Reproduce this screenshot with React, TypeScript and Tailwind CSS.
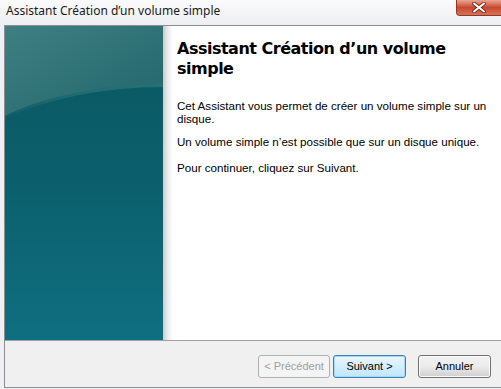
import React from "react";

function LeftArt() {
  return (
    <svg width="158" height="314" viewBox="0 0 158 314" className="block">
      <defs>
        <linearGradient id="top" x1="0" y1="0" x2="1" y2="1">
          <stop offset="0" stopColor="#3e7f82" />
          <stop offset="1" stopColor="#22666b" />
        </linearGradient>
        <linearGradient id="bot" x1="0" y1="0" x2="0" y2="1">
          <stop offset="0" stopColor="#0a5860" />
          <stop offset="0.5" stopColor="#0b5f6c" />
          <stop offset="1" stopColor="#0f6f80" />
        </linearGradient>
        <linearGradient id="edge" x1="0" y1="0" x2="0" y2="1">
          <stop offset="0" stopColor="#4d8b8e" stopOpacity="0.45" />
          <stop offset="1" stopColor="#4d8b8e" stopOpacity="0" />
        </linearGradient>
      </defs>
      <rect x="0" y="0" width="158" height="314" fill="url(#bot)" />
      <path d="M0 0 H158 V58 C100 58 40 70 0 90 Z" fill="url(#top)" />
      <path d="M0 90 C40 70 100 58 158 58 V61 C100 61 40 73 0 93 Z" fill="url(#edge)" />
    </svg>
  );
}

export default function App() {
  return (
    <div
      className="w-[501px] h-[389px] overflow-hidden bg-[#eef0f3] relative"
      style={{ fontFamily: '"Noto Sans", "Liberation Sans", sans-serif' }}
    >
      {/* Title bar */}
      <div className="h-[25px] flex items-start bg-gradient-to-b from-[#fbfbfc] to-[#eceef1] relative">
        <div className="pl-[6px] pt-[3px] text-[12px] leading-[16px] text-[#1a1a1a]">
          Assistant Création d’un volume simple
        </div>
        <div className="absolute left-[456px] top-0 w-[50px] h-[16px] rounded-bl-[4px] border border-t-0 border-[#8a3a2a] bg-gradient-to-b from-[#e9a592] via-[#c8482f] to-[#d77256] flex items-center justify-center">
          <svg width="14" height="11" viewBox="0 0 14 11" className="ml-[-4px]">
            <path d="M2 1.5 L12 9.5 M12 1.5 L2 9.5" stroke="#6b2a1e" strokeWidth="3.6" strokeLinecap="round" />
            <path d="M2 1.5 L12 9.5 M12 1.5 L2 9.5" stroke="#ffffff" strokeWidth="2" strokeLinecap="round" />
          </svg>
        </div>
      </div>

      {/* Client frame */}
      <div className="ml-[4px] border-t border-l border-b border-[#8e8e8e] bg-[#f0f0f0] h-[363px] flex flex-col">
        <div className="flex h-[314px] bg-white">
          <div className="w-[158px] shrink-0">
            <LeftArt />
          </div>
          <div className="w-[10px] shrink-0 bg-gradient-to-r from-[#c9cccf] via-[#ecedee] to-white" />
          <div className="pl-[4px] pt-[13px]">
            <div
              className="text-[16px] leading-[20px] font-bold text-black"
              style={{ fontFamily: '"DejaVu Sans", Verdana, sans-serif', letterSpacing: "-0.5px" }}
            >
              Assistant Création d’un volume
              <br />
              simple
            </div>
            <div
              className="mt-[20px] text-[11.6px] leading-[13px] text-black whitespace-nowrap"
              style={{ fontFamily: '"Liberation Sans", Arial, sans-serif' }}
            >
              <p>
                Cet Assistant vous permet de créer un volume simple sur un
                <br />
                disque.
              </p>
              <p className="mt-[10px]">Un volume simple n’est possible que sur un disque unique.</p>
              <p className="mt-[13px]">Pour continuer, cliquez sur Suivant.</p>
            </div>
          </div>
        </div>
        <div
          className="border-t border-[#a0a0a0] flex-1 flex items-start justify-end pt-[14px] pr-[10px]"
          style={{ fontFamily: '"Liberation Sans", Arial, sans-serif' }}
        >
          <div className="w-[72px] h-[23px] rounded-[3px] border border-[#adb2b5] bg-[#f4f4f4] text-[#a0a0a0] text-[11px] flex items-center justify-center">
            &lt; Précédent
          </div>
          <div className="ml-[3px] w-[73px] h-[23px] rounded-[3px] border border-[#3c7fb1] bg-gradient-to-b from-[#eaf6fd] to-[#bee6fd] text-black text-[11px] flex items-center justify-center shadow-[inset_0_0_0_1px_#a6d8f5]">
            Suivant &gt;
          </div>
          <div className="ml-[12px] w-[73px] h-[23px] rounded-[3px] border border-[#707070] bg-gradient-to-b from-[#f2f2f2] via-[#ebebeb] to-[#cfcfcf] text-black text-[11px] flex items-center justify-center shadow-[inset_0_0_0_1px_#fcfcfc]">
            Annuler
          </div>
        </div>
      </div>
    </div>
  );
}
